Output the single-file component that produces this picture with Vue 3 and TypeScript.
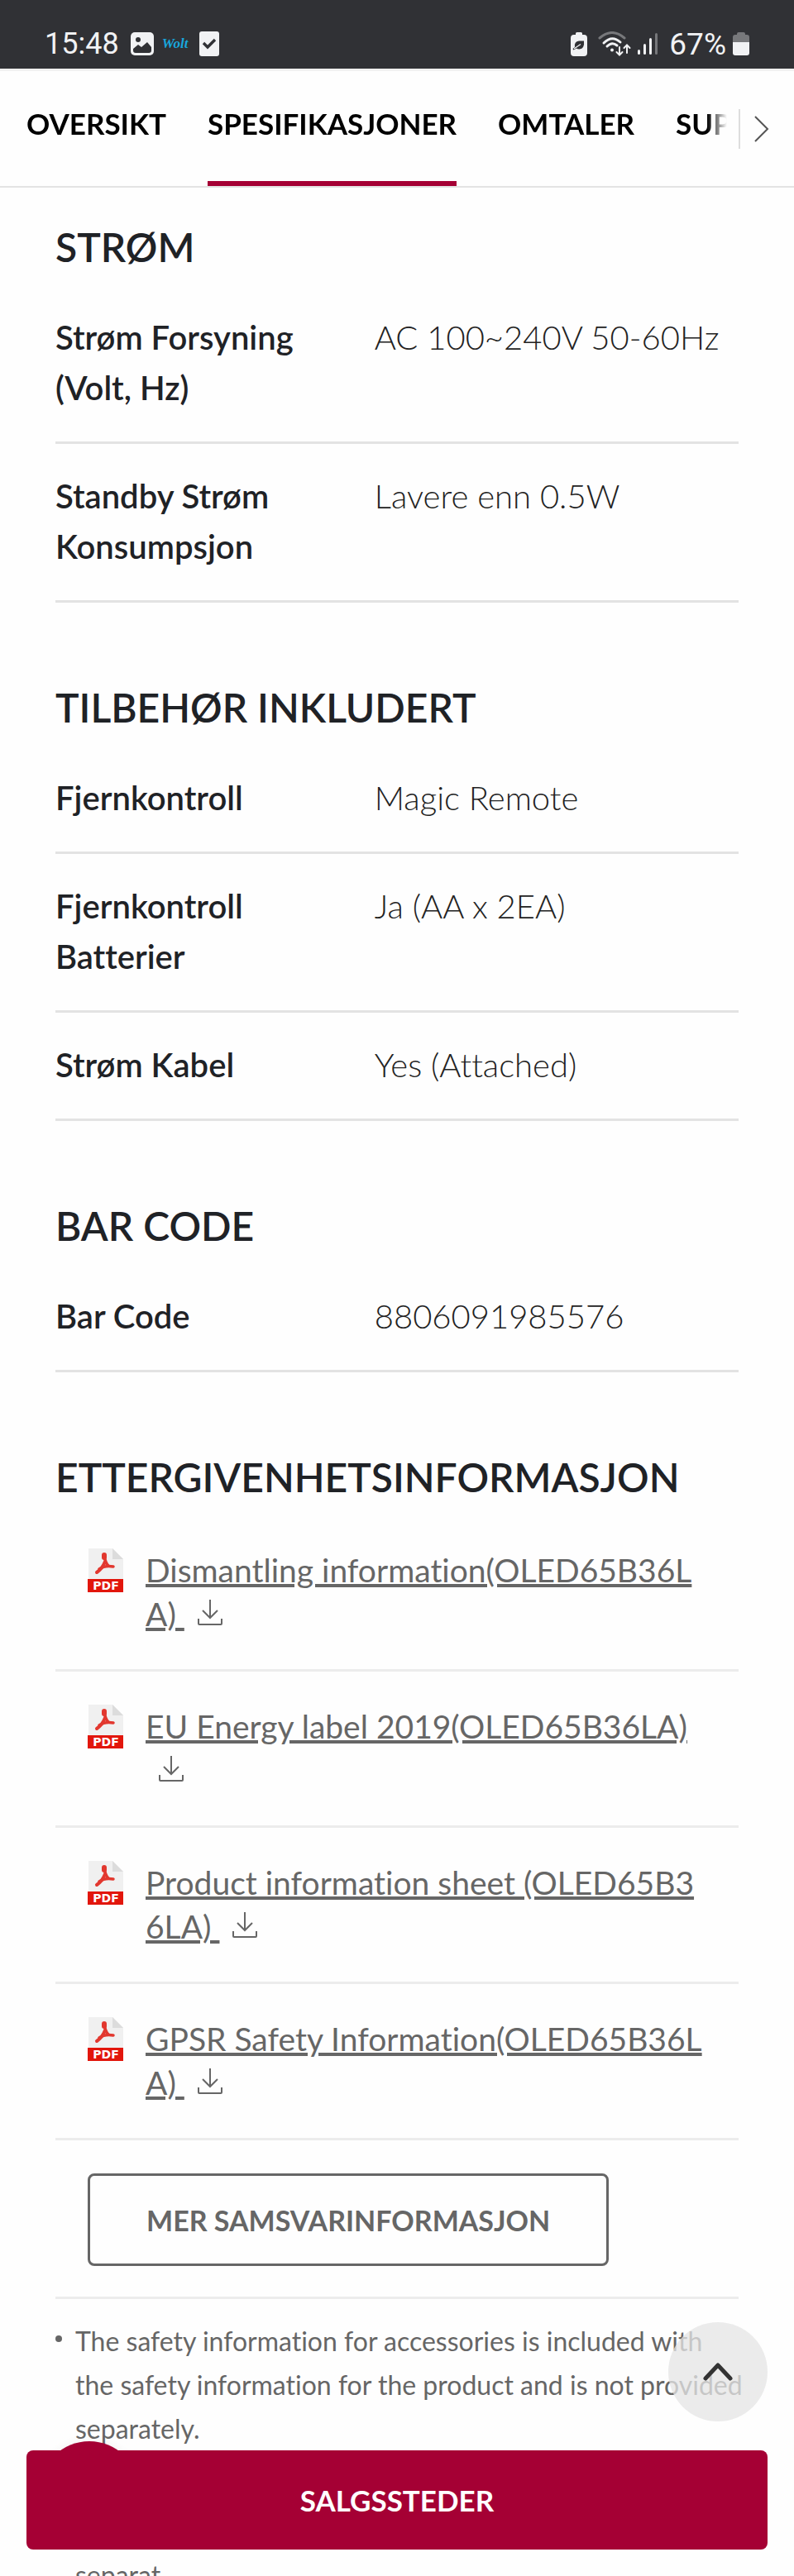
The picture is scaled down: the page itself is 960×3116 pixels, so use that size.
<script setup lang="ts">
interface SpecRow {
  label: string
  value: string
}
interface SpecGroup {
  title: string
  rows: SpecRow[]
}

const tabs: string[] = ['OVERSIKT', 'SPESIFIKASJONER', 'OMTALER', 'SUPPORT']
const activeTab = 'SPESIFIKASJONER'

const groups: SpecGroup[] = [
  {
    title: 'STRØM',
    rows: [
      { label: 'Strøm Forsyning (Volt, Hz)', value: 'AC 100~240V 50-60Hz' },
      { label: 'Standby Strøm Konsumpsjon', value: 'Lavere enn 0.5W' },
    ],
  },
  {
    title: 'TILBEHØR INKLUDERT',
    rows: [
      { label: 'Fjernkontroll', value: 'Magic Remote' },
      { label: 'Fjernkontroll Batterier', value: 'Ja (AA x 2EA)' },
      { label: 'Strøm Kabel', value: 'Yes (Attached)' },
    ],
  },
  {
    title: 'BAR CODE',
    rows: [{ label: 'Bar Code', value: '8806091985576' }],
  },
]

const documents: string[] = [
  'Dismantling information(OLED65B36LA)',
  'EU Energy label 2019(OLED65B36LA)',
  'Product information sheet (OLED65B36LA)',
  'GPSR Safety Information(OLED65B36LA)',
]

const notes: string[] = [
  'The safety information for accessories is included with\nthe safety information for the product and is not provided separately.',
  'Sikkerhetsinformasjonen for tilbehør er inkludert i\nsikkerhetsinformasjonen for produktet og leveres ikke separat.',
]
</script>

<template>
  <div class="screen">
    <header class="status">
      <div class="status-side">
        <span class="clock">15:48</span>
        <svg class="ic-photo" viewBox="0 0 28 28" aria-hidden="true">
          <rect width="28" height="28" rx="5" fill="#f1f2f4" />
          <circle cx="9" cy="9" r="3" fill="#303135" />
          <path d="M3 20 L9 15 L13 18 L20 12 L25 18 V22 Q25 25 22 25 H6 Q3 25 3 22 Z" fill="#303135" />
        </svg>
        <span class="wolt">Wolt</span>
        <svg class="ic-check" viewBox="0 0 24 30" aria-hidden="true">
          <rect width="24" height="30" rx="3" fill="#f1f2f4" />
          <path d="M5 14 L10 19 L19 10" fill="none" stroke="#303135" stroke-width="3.4" />
        </svg>
      </div>
      <div class="status-side">
        <svg class="ic-saver" viewBox="0 0 20 29" aria-hidden="true">
          <path d="M6 3 V1.500 Q6 0 7.500 0 H12.500 Q14 0 14 1.500 V3 H16 Q20 3 20 7 V25 Q20 29 16 29 H4 Q0 29 0 25 V7 Q0 3 4 3 Z" fill="#f1f2f4" />
          <path d="M16 10.500 Q17 20 10.500 20.500 Q8 20.500 7 19.500 L3.500 21.500 L2.500 20 L5 18 Q4 11 10 10.500 Z" fill="#303135" />
          <path d="M4 20 L12 14.500" stroke="#f1f2f4" stroke-width="1.300" />
        </svg>
        <svg class="ic-wifi" viewBox="0 0 40 30" fill="none" stroke-linecap="round" aria-hidden="true">
          <path d="M2 8 Q17 -5 32 8" stroke="#77787b" stroke-width="3" />
          <path d="M7 14 Q17 4 27 13" stroke="#f1f2f4" stroke-width="3" />
          <path d="M11 18 Q17 12 23 17" stroke="#f1f2f4" stroke-width="3" />
          <circle cx="17" cy="22.500" r="2" fill="#f1f2f4" />
          <path d="M26 19 V28 M22.500 25 L26 28.500 L29.500 25 M35 26 V17 M31.500 20 L35 16.500 L38.500 20" stroke="#f1f2f4" stroke-width="2" />
        </svg>
        <svg class="ic-signal" viewBox="0 0 24 26" aria-hidden="true">
          <rect x="0" y="20" width="3" height="6" rx="1.500" fill="#f1f2f4" />
          <rect x="7" y="13" width="3" height="13" rx="1.500" fill="#f1f2f4" />
          <rect x="14" y="6" width="3" height="20" rx="1.500" fill="#f1f2f4" />
          <rect x="21" y="0" width="3" height="26" rx="1.500" fill="#77787b" />
        </svg>
        <span class="percent">67%</span>
        <svg class="ic-battery" viewBox="0 0 20 28" aria-hidden="true">
          <path d="M5 3 V2 Q5 0 7 0 H13 Q15 0 15 2 V3 H17 Q20 3 20 6 V12 H0 V6 Q0 3 3 3 Z" fill="#77787b" />
          <path d="M0 12 H20 V25 Q20 28 17 28 H3 Q0 28 0 25 Z" fill="#f1f2f4" />
        </svg>
      </div>
    </header>

    <nav class="tabs">
      <div class="tab-strip">
        <a v-for="tab in tabs" :key="tab" href="#" class="tab" :class="{ active: tab === activeTab }">{{ tab }}</a>
      </div>
      <button type="button" class="tab-next" aria-label="Neste">
        <svg viewBox="0 0 18 32" aria-hidden="true">
          <path d="M1 1 L16 16 L1 31" fill="none" stroke="#555" stroke-width="2" />
        </svg>
      </button>
    </nav>

    <main class="content">
      <section v-for="group in groups" :key="group.title" class="group">
        <h2>{{ group.title }}</h2>
        <table>
          <tbody>
            <tr v-for="row in group.rows" :key="row.label">
              <th scope="row">{{ row.label }}</th>
              <td>{{ row.value }}</td>
            </tr>
          </tbody>
        </table>
      </section>

      <section class="group">
        <h2>ETTERGIVENHETSINFORMASJON</h2>
        <ul class="docs">
          <li v-for="doc in documents" :key="doc">
            <svg class="ic-pdf" viewBox="0 0 43 53" aria-hidden="true">
              <path d="M1 0 H30 L43 13 V38 H1 Z" fill="#f0f0f0" />
              <path d="M30 0 L43 13 H30 Z" fill="#dcdcdc" />
              <rect y="37" width="43" height="16" fill="#e2160c" />
              <g fill="none" stroke="#e2382f" stroke-linecap="round" stroke-linejoin="round">
                <path d="M20 8 V11" stroke-width="6" />
                <path d="M20 8 Q21 17 25 21" stroke-width="3.500" />
                <path d="M21 16 Q18 24 11 29" stroke-width="4" />
                <path d="M14 25 Q21 20 31 22" stroke-width="3.500" />
              </g>
              <text x="22" y="50" text-anchor="middle">PDF</text>
            </svg>
            <a href="#">{{ doc }} <svg class="ic-download" viewBox="0 0 30 32" aria-hidden="true">
              <path d="M15 0 V22 M6 13 L15 22 L24 13 M1 23 V29 Q1 30 2 30 H28 Q29 30 29 29 V23" fill="none" stroke="#666" stroke-width="2" />
            </svg></a>
          </li>
          <li>
            <button type="button" class="more">MER SAMSVARINFORMASJON</button>
          </li>
        </ul>
        <ul class="notes">
          <li v-for="note in notes" :key="note">{{ note }}</li>
        </ul>
      </section>
    </main>

    <span class="bubble" aria-hidden="true"></span>
    <button type="button" class="to-top" aria-label="Til toppen">
      <svg viewBox="0 0 36 24" aria-hidden="true">
        <path d="M3 20 L18 4 L33 20" fill="none" stroke="#333" stroke-width="5" stroke-linecap="round" stroke-linejoin="round" />
      </svg>
    </button>
    <button type="button" class="buy">SALGSSTEDER</button>
  </div>
</template>

<style>
body {
  margin: 0;
  background: #fefefe;
}
</style>

<style scoped>
.screen {
  display: flex;
  flex-direction: column;
  height: 100vh;
  overflow: hidden;
  background: #fefefe;
  color: #1f2226;
  font-family: Lato, "Noto Sans", sans-serif;
  font-variant-ligatures: none;
}
button {
  font-family: inherit;
  cursor: pointer;
}
svg {
  display: block;
}

.status {
  flex: none;
  display: flex;
  justify-content: space-between;
  height: 83px;
  padding: 23px 54px 0 54px;
  box-sizing: border-box;
  background: #303135;
  color: #f1f2f4;
  font-family: Roboto, sans-serif;
  font-size: 36px;
}
.status-side {
  display: flex;
  align-items: center;
}
.ic-photo {
  width: 28px;
  height: 28px;
  margin-left: 14px;
}
.wolt {
  margin: 0 14px 0 10px;
  color: #18a6dc;
  font: italic 700 17px "Liberation Serif", serif;
}
.ic-check {
  width: 24px;
  height: 30px;
}
.ic-saver {
  width: 20px;
  height: 29px;
}
.ic-wifi {
  width: 40px;
  height: 30px;
  margin-left: 13px;
}
.ic-signal {
  width: 24px;
  height: 26px;
  margin: 0 14px 0 8px;
}
.ic-battery {
  width: 20px;
  height: 28px;
  margin-left: 8px;
}
.percent {
  font-size: 37px;
}

.tabs {
  flex: none;
  display: flex;
  align-items: center;
  height: 144px;
  box-sizing: border-box;
  border-top: 3px solid #f1f1f1;
  border-bottom: 2px solid #e3e3e3;
}
.tab-strip {
  flex: 1;
  display: flex;
  gap: 50px;
  height: 100%;
  min-width: 0;
  margin-right: 14px;
  padding-left: 32px;
  overflow: hidden;
  mask-image: linear-gradient(to left, transparent, #000 24px);
}
.tab {
  flex: none;
  height: 133px;
  border-bottom: 6px solid transparent;
  color: #000;
  font-size: 35px;
  font-weight: 700;
  line-height: 126px;
  text-decoration: none;
}
.tab.active {
  border-color: #a50034;
}
.tab-next {
  width: 67px;
  height: 48px;
  padding: 0 0 0 17px;
  border: 0;
  border-left: 2px solid #ddd;
  background: none;
}
.tab-next svg {
  width: 18px;
  height: 32px;
}

.content {
  flex: 1;
  min-height: 0;
  overflow-y: auto;
  scrollbar-width: none;
  padding: 40px 67px 0;
}
.group {
  margin-bottom: 95px;
}
h2 {
  margin: 0;
  font-size: 48px;
  font-weight: 600;
  line-height: 64px;
}
table {
  width: 100%;
  border-collapse: collapse;
  table-layout: fixed;
}
th,
td {
  padding: 33px 0 34px;
  border-bottom: 3px solid #e3e3e3;
  font-size: 40px;
  line-height: 61px;
  text-align: left;
  vertical-align: top;
}
tr:first-child th,
tr:first-child td {
  padding-top: 47px;
}
th {
  width: 46.7%;
  padding-right: 40px;
  box-sizing: border-box;
  font-weight: 600;
}
td {
  color: #222;
  font-weight: 300;
}

.docs,
.notes {
  margin: 0;
  padding: 0;
  list-style: none;
}
.docs {
  margin-top: 14px;
}
.docs li {
  display: flex;
  gap: 27px;
  padding: 40px 39px;
  border-bottom: 3px solid #ececec;
}
.docs li:last-child {
  padding-bottom: 37px;
}
.ic-pdf {
  flex: none;
  width: 43px;
  height: 53px;
}
.ic-pdf text {
  fill: #fff;
  font: 700 14px "DejaVu Sans", sans-serif;
}
.docs a {
  min-width: 0;
  color: #666;
  font-size: 39px;
  line-height: 53px;
  text-decoration-thickness: 4px;
  text-underline-offset: 2px;
  word-break: break-all;
}
.ic-download {
  display: inline-block;
  width: 30px;
  height: 32px;
  margin-left: 16px;
}
.more {
  height: 112px;
  padding: 0 68px;
  border: 3px solid #666;
  border-radius: 8px;
  background: none;
  color: #666;
  font-size: 34px;
  font-weight: 700;
}
.notes {
  margin-right: -12px;
  padding-top: 6px;
}
.notes li {
  position: relative;
  margin-top: 18px;
  padding-left: 24px;
  color: #666;
  font-size: 32px;
  line-height: 53px;
  white-space: pre-line;
}
.notes li::before {
  content: "";
  position: absolute;
  top: 20px;
  left: 0;
  width: 8px;
  height: 8px;
  border-radius: 50%;
  background: #666;
}

.bubble,
.to-top,
.buy {
  position: fixed;
}
.bubble {
  bottom: 43px;
  left: 48px;
  width: 120px;
  height: 120px;
  border-radius: 50%;
  background: #a50034;
  box-shadow: 0 0 12px rgba(0, 0, 0, 0.06);
}
.to-top {
  right: 32px;
  bottom: 187px;
  display: grid;
  place-items: center;
  width: 120px;
  height: 120px;
  padding: 0;
  border: 0;
  border-radius: 50%;
  background: rgba(229, 229, 229, 0.76);
}
.to-top svg {
  width: 36px;
  height: 24px;
}
.buy {
  right: 32px;
  bottom: 32px;
  left: 32px;
  height: 120px;
  border: 0;
  border-radius: 8px;
  background: #a50034;
  color: #fff;
  font-size: 35px;
  font-weight: 700;
}
</style>
